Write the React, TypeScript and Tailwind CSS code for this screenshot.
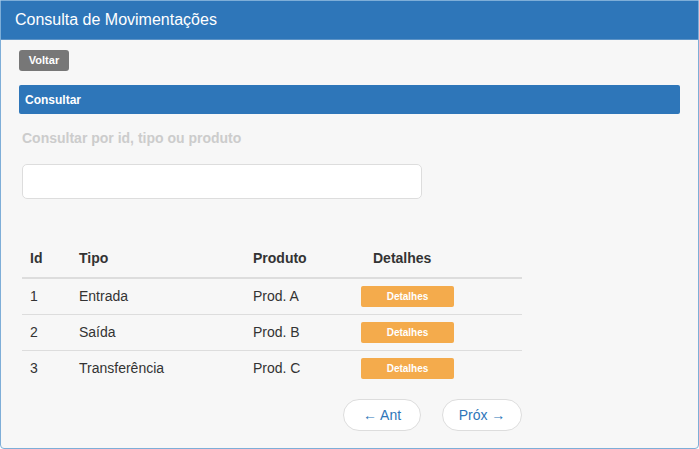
import React from "react";

const rows = [
  { id: 1, tipo: "Entrada", produto: "Prod. A" },
  { id: 2, tipo: "Saída", produto: "Prod. B" },
  { id: 3, tipo: "Transferência", produto: "Prod. C" },
];

export default function App() {
  return (
    <div
      className="w-[699px] h-[449px] bg-white"
      style={{ fontFamily: '"Liberation Sans", Arial, sans-serif' }}
    >
      <div className="w-[699px] h-[449px] border border-[#7eaed8] rounded-b-[4px] bg-[#f7f7f7] flex flex-col overflow-hidden">
        <div className="h-[39px] bg-[#2e76b9] flex items-center pl-[14px] text-white text-[16px] shrink-0 border-b border-[#5d93c6]">
          Consulta de Movimentações
        </div>
        <div className="pl-[18px] pr-[18px] pt-[7px] flex flex-col">
          <div>
            <button className="h-[21px] w-[50px] bg-[#777777] text-white text-[11px] font-bold rounded-[3px]">
              Voltar
            </button>
          </div>
          <div className="mt-[14px] h-[29px] bg-[#2e76b9] rounded-[2px] flex items-center pl-[6px] text-white text-[12px] font-bold">
            Consultar
          </div>
          <div className="pl-[3px]">
            <div className="mt-[16px] text-[14px] font-bold text-[#cccccc] leading-[16px]">
              Consultar por id, tipo ou produto
            </div>
            <input
              className="mt-[18px] block w-[400px] h-[35px] bg-white border border-[#dddddd] rounded-[5px] outline-none"
              type="text"
            />
            <table className="mt-[41px] w-[500px] border-collapse text-[14px] text-[#333333]">
              <thead>
                <tr className="h-[38px] border-b-2 border-[#dddddd]">
                  <th className="w-[49px] text-left font-bold pl-[8px] align-middle">Id</th>
                  <th className="w-[174px] text-left font-bold pl-[8px]">Tipo</th>
                  <th className="w-[108px] text-left font-bold pl-[8px]">Produto</th>
                  <th className="text-left font-bold pl-[20px]">Detalhes</th>
                </tr>
              </thead>
              <tbody>
                {rows.map((r, i) => (
                  <tr
                    key={r.id}
                    className={
                      i < rows.length - 1
                        ? "h-[36px] border-b border-[#dddddd]"
                        : "h-[36px]"
                    }
                  >
                    <td className="pl-[8px]">{r.id}</td>
                    <td className="pl-[8px]">{r.tipo}</td>
                    <td className="pl-[8px]">{r.produto}</td>
                    <td className="pl-[8px]">
                      <button className="w-[93px] h-[21px] bg-[#f4ab4c] text-white text-[10px] font-bold rounded-[2px]">
                        Detalhes
                      </button>
                    </td>
                  </tr>
                ))}
              </tbody>
            </table>
            <div className="w-[500px] flex justify-end gap-[21px] mt-[13px]">
              <button className="w-[78px] h-[32px] bg-white border border-[#dddddd] rounded-full text-[#2e76b9] text-[14px]">
                ← Ant
              </button>
              <button className="w-[80px] h-[32px] bg-white border border-[#dddddd] rounded-full text-[#2e76b9] text-[14px]">
                Próx →
              </button>
            </div>
          </div>
        </div>
      </div>
    </div>
  );
}
